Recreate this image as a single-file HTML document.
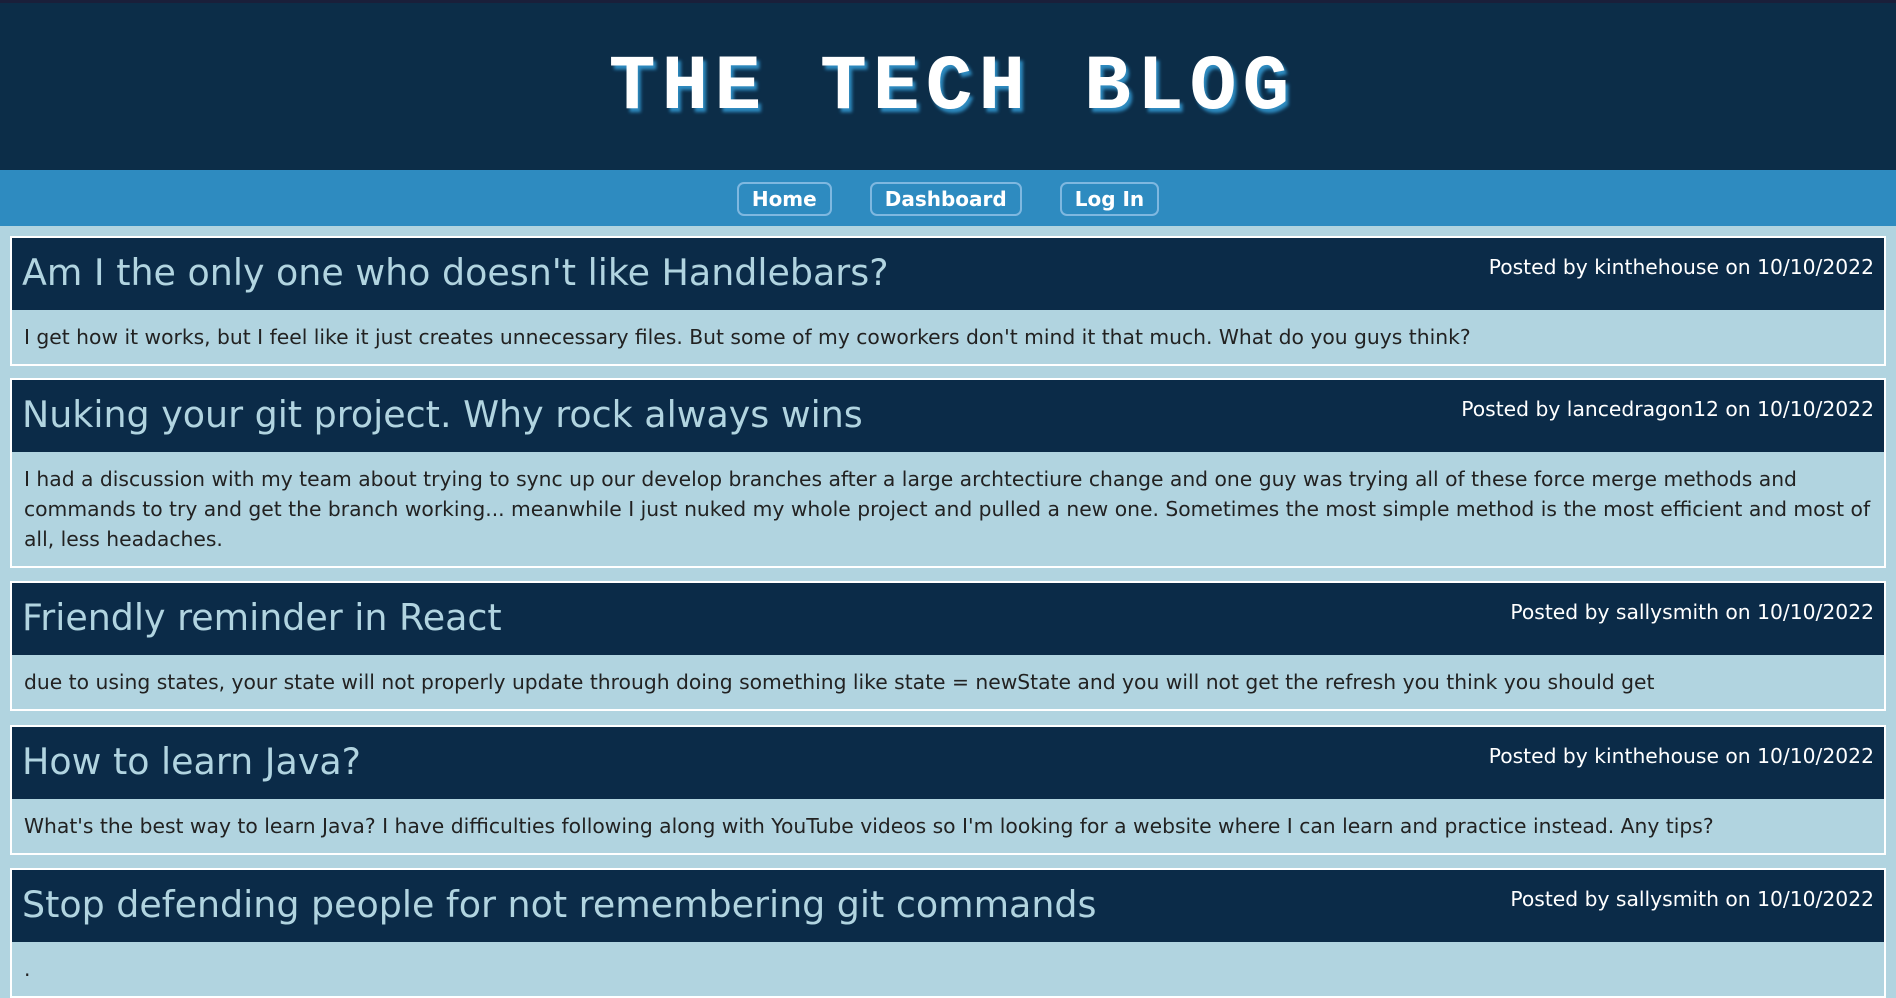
<!DOCTYPE html>
<html><head><meta charset="utf-8"><style>
*{box-sizing:border-box;margin:0;padding:0}
body{width:1896px;height:940px;overflow:hidden;background:#b1d4e0;font-family:"DejaVu Sans","Liberation Sans",sans-serif}
.top{height:170px;background:#0c2d48;border-top:3px solid #1a1f3a;display:flex;align-items:center;justify-content:center}
.top h1{font-family:"Liberation Mono",monospace;font-weight:bold;font-size:78px;letter-spacing:6px;color:#fff;text-shadow:3px 4px 3px #2e8bc0;margin-left:8px;margin-top:2px}
nav{height:56px;background:#2e8bc0;display:flex;justify-content:center;align-items:center;gap:0}
nav a{display:inline-block;color:#fff;font-weight:bold;font-size:20px;border:2px solid #7fb8e0;border-radius:7px;height:34px;line-height:30px;padding:0 13px;text-decoration:none;font-family:"DejaVu Sans",sans-serif;margin-top:2px}
.card{position:absolute;left:10px;width:1876px;border:2px solid #fff;background:#b1d4e0}
.card .h{background:#0b2b48;height:72px;display:flex;justify-content:space-between;align-items:center;padding:0 10px}
.card .h h2{font-weight:normal;color:#b1d4e0;font-size:36.4px;margin-top:-4px}
.card .h span{color:#fff;font-size:20.3px;margin-top:-14px}
.card p{font-size:20.3px;color:#222;line-height:30px;padding:12px 12px 12px}
</style></head><body>
<div class="top"><h1>THE TECH BLOG</h1></div>
<nav><a href="#" style="margin-right:38px">Home</a><a href="#" style="margin-right:38px">Dashboard</a><a href="#">Log In</a></nav>
<div class="card" style="top:236px"><div class="h"><h2>Am I the only one who doesn't like Handlebars?</h2><span>Posted by kinthehouse on 10/10/2022</span></div><p>I get how it works, but I feel like it just creates unnecessary files. But some of my coworkers don't mind it that much. What do you guys think?</p></div>
<div class="card" style="top:378px"><div class="h"><h2>Nuking your git project. Why rock always wins</h2><span>Posted by lancedragon12 on 10/10/2022</span></div><p>I had a discussion with my team about trying to sync up our develop branches after a large archtectiure change and one guy was trying all of these force merge methods and commands to try and get the branch working... meanwhile I just nuked my whole project and pulled a new one. Sometimes the most simple method is the most efficient and most of all, less headaches.</p></div>
<div class="card" style="top:581px"><div class="h"><h2>Friendly reminder in React</h2><span>Posted by sallysmith on 10/10/2022</span></div><p>due to using states, your state will not properly update through doing something like state = newState and you will not get the refresh you think you should get</p></div>
<div class="card" style="top:725px"><div class="h"><h2>How to learn Java?</h2><span>Posted by kinthehouse on 10/10/2022</span></div><p>What's the best way to learn Java? I have difficulties following along with YouTube videos so I'm looking for a website where I can learn and practice instead. Any tips?</p></div>
<div class="card" style="top:868px"><div class="h"><h2>Stop defending people for not remembering git commands</h2><span>Posted by sallysmith on 10/10/2022</span></div><p>.</p></div>
</body></html>
